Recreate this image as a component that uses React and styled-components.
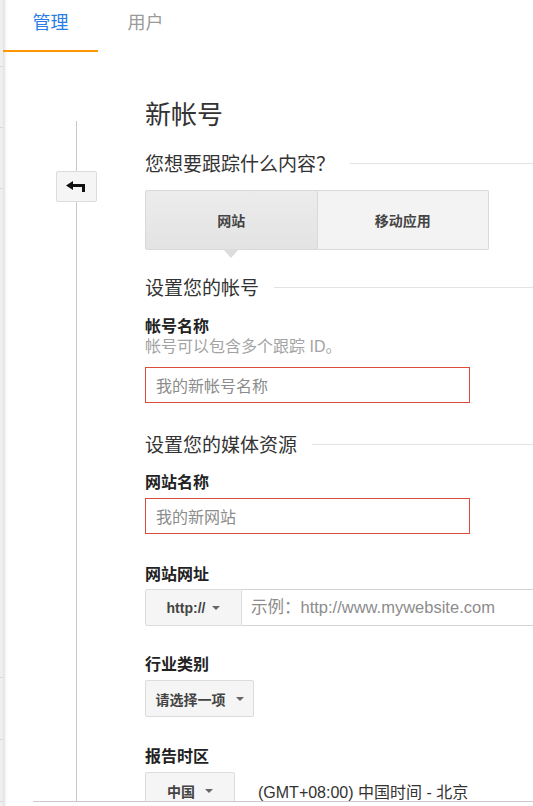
import React from 'react';
import styled, { createGlobalStyle } from 'styled-components';

const Global = createGlobalStyle`
  html, body { margin: 0; padding: 0; background: #fff; overflow: hidden; }
  body { font-family: "Liberation Sans", "Noto Sans CJK SC", sans-serif; color: #333; }
  * { box-sizing: border-box; }
`;

const CJK = `"Noto Sans CJK SC", "Liberation Sans", sans-serif`;

const Page = styled.div`
  display: flex;
  width: 533px;
  height: 806px;
  overflow: hidden;
`;

const Sidebar = styled.div`
  width: 3px;
  flex: none;
  background: #efefef;
  display: flex;
  flex-direction: column;
`;

const SideItem = styled.div`
  flex: none;
  height: ${(p) => p.$h}px;
  border-bottom: 1px solid #d9d9d9;
`;

const Main = styled.div`
  flex: 1;
  min-width: 0;
  display: flex;
  flex-direction: column;
  box-shadow: inset 4px 0 3px -2px rgba(0, 0, 0, 0.13);
`;

const TabBar = styled.div`
  display: flex;
  height: 52px;
  flex: none;
`;

const Tab = styled.div`
  width: 95px;
  height: 52px;
  padding-top: 9px;
  text-align: center;
  font-family: ${CJK};
  font-size: 18px;
  line-height: 24px;
  color: ${(p) => (p.$active ? '#2b7de6' : '#9a9a9a')};
  border-bottom: 2px solid ${(p) => (p.$active ? '#ff9800' : 'transparent')};
`;

const Content = styled.div`
  flex: none;
  margin-left: 30px;
  height: 750px;
  border-bottom: 1px solid #cccccc;
  display: flex;
  overflow: hidden;
`;

const Rail = styled.div`
  flex: none;
  width: 41px;
  margin-left: 23px;
  margin-top: 69px;
  background: linear-gradient(#c8c8c8, #c8c8c8) no-repeat center top / 1px 100%;
  display: flex;
  flex-direction: column;
`;

const BackButton = styled.button`
  flex: none;
  margin-top: 50px;
  width: 41px;
  height: 31px;
  padding: 0 2px 0 0;
  background: #f5f5f5;
  border: 1px solid #dcdcdc;
  border-radius: 2px;
  display: flex;
  align-items: center;
  justify-content: center;
  cursor: pointer;
`;

const Form = styled.div`
  flex: 1;
  min-width: 0;
  margin-left: 48px;
  padding-top: 44px;
  display: flex;
  flex-direction: column;
  align-items: flex-start;
  & > * { flex-shrink: 0; }
`;

const Title = styled.h1`
  margin: 0;
  font-family: ${CJK};
  font-size: 26px;
  line-height: 34px;
  font-weight: normal;
  color: #333;
`;

const SectionHeading = styled.h2`
  align-self: stretch;
  margin: ${(p) => p.$mt}px 0 0;
  display: flex;
  align-items: center;
  gap: 15px;
  font-family: ${CJK};
  font-size: 19px;
  line-height: 26px;
  font-weight: normal;
  color: #333;
  white-space: nowrap;
  &::after {
    content: '';
    flex: 1;
    height: 1px;
    background: #e3e3e3;
  }
`;

const Segmented = styled.div`
  margin-top: ${(p) => p.$mt}px;
  display: flex;
  width: 344px;
  height: 60px;
`;

const SegButton = styled.button`
  position: relative;
  flex: 1;
  padding: 0;
  font-family: ${CJK};
  font-size: 14px;
  font-weight: bold;
  color: #444;
  border: 1px solid #d9d9d9;
  border-left-width: ${(p) => (p.$first ? '1px' : '0')};
  border-radius: ${(p) => (p.$first ? '2px 0 0 2px' : '0 2px 2px 0')};
  background: ${(p) =>
    p.$selected ? 'linear-gradient(#ececec, #e3e3e3)' : '#f3f3f3'};
  cursor: pointer;
  &::after {
    content: '';
    display: ${(p) => (p.$selected ? 'block' : 'none')};
    position: absolute;
    left: 50%;
    top: 100%;
    margin-left: -8px;
    width: 0;
    height: 0;
    border-left: 8px solid transparent;
    border-right: 8px solid transparent;
    border-top: 9px solid #dcdcdc;
  }
`;

const Label = styled.div`
  margin-top: ${(p) => p.$mt}px;
  font-family: ${CJK};
  font-size: 16px;
  line-height: 22px;
  font-weight: bold;
  color: #222;
`;

const Hint = styled.div`
  font-size: 16px;
  line-height: 22px;
  color: #a3a3a3;
`;

const TextInput = styled.input`
  margin-top: ${(p) => p.$mt}px;
  width: 325px;
  height: 36px;
  padding: 0 10px;
  border: 1px solid #dd4b39;
  border-radius: 0;
  font-family: ${CJK};
  font-size: 16px;
  color: #333;
  outline: none;
  &::placeholder { color: #8c8c8c; }
`;

const UrlGroup = styled.div`
  margin-top: ${(p) => p.$mt}px;
  display: flex;
  width: 430px;
  height: 37px;
`;

const SelectBtn = styled.div`
  flex: none;
  margin-top: ${(p) => p.$mt || 0}px;
  display: inline-flex;
  align-items: center;
  justify-content: center;
  gap: ${(p) => p.$gap || 10}px;
  width: ${(p) => p.$w}px;
  height: 37px;
  background: #f5f5f5;
  border: 1px solid #dcdcdc;
  border-radius: ${(p) => (p.$joined ? '2px 0 0 2px' : '2px')};
  font-size: 14px;
  font-weight: bold;
  color: #444;
  cursor: pointer;
`;

const Caret = styled.span`
  width: 0;
  height: 0;
  border-left: 4px solid transparent;
  border-right: 4px solid transparent;
  border-top: 4px solid #666;
`;

const UrlInput = styled.input`
  flex: 1;
  min-width: 0;
  height: 37px;
  padding: 0 9px;
  border: 1px solid #d3d3d3;
  border-left: none;
  font-family: "Liberation Sans", "Noto Sans CJK SC", sans-serif;
  font-size: 16.5px;
  color: #333;
  outline: none;
  &::placeholder { color: #8c8c8c; }
`;

const Row = styled.div`
  margin-top: ${(p) => p.$mt}px;
  display: flex;
  align-items: center;
  gap: 23px;
`;

const ZoneText = styled.span`
  font-size: 16px;
  color: #333;
`;

const BackIcon = () => (
  <svg width="19" height="11" viewBox="0 0 19 11" aria-hidden="true">
    <path d="M0 4.5 L7 0 L7 3 L19 3 L19 11 L16 11 L16 6 L7 6 L7 9 Z" fill="#111" />
  </svg>
);

export default function App() {
  return (
    <>
      <Global />
      <Page>
        <Sidebar>
          {[67, 61, 61, 489, 62, 62].map((h, i) => (
            <SideItem key={i} $h={h} />
          ))}
        </Sidebar>
        <Main>
          <TabBar>
            <Tab $active>管理</Tab>
            <Tab>用户</Tab>
          </TabBar>
          <Content>
            <Rail>
              <BackButton aria-label="返回">
                <BackIcon />
              </BackButton>
            </Rail>
            <Form>
              <Title>新帐号</Title>
              <SectionHeading $mt={20}>您想要跟踪什么内容？</SectionHeading>
              <Segmented $mt={14}>
                <SegButton $first $selected>网站</SegButton>
                <SegButton>移动应用</SegButton>
              </Segmented>
              <SectionHeading $mt={24}>设置您的帐号</SectionHeading>
              <Label $mt={14}>帐号名称</Label>
              <Hint>帐号可以包含多个跟踪 ID。</Hint>
              <TextInput $mt={9} placeholder="我的新帐号名称" />
              <SectionHeading $mt={28}>设置您的媒体资源</SectionHeading>
              <Label $mt={13}>网站名称</Label>
              <TextInput $mt={6} placeholder="我的新网站" />
              <Label $mt={28}>网站网址</Label>
              <UrlGroup $mt={5}>
                <SelectBtn $w={97} $gap={7} $joined>
                  http://
                  <Caret />
                </SelectBtn>
                <UrlInput placeholder="示例：http://www.mywebsite.com" />
              </UrlGroup>
              <Label $mt={26}>行业类别</Label>
              <SelectBtn $mt={6} $w={109}>
                请选择一项
                <Caret />
              </SelectBtn>
              <Label $mt={27}>报告时区</Label>
              <Row $mt={6}>
                <SelectBtn $w={90}>
                  中国
                  <Caret />
                </SelectBtn>
                <ZoneText>(GMT+08:00) 中国时间 - 北京</ZoneText>
              </Row>
            </Form>
          </Content>
        </Main>
      </Page>
    </>
  );
}
